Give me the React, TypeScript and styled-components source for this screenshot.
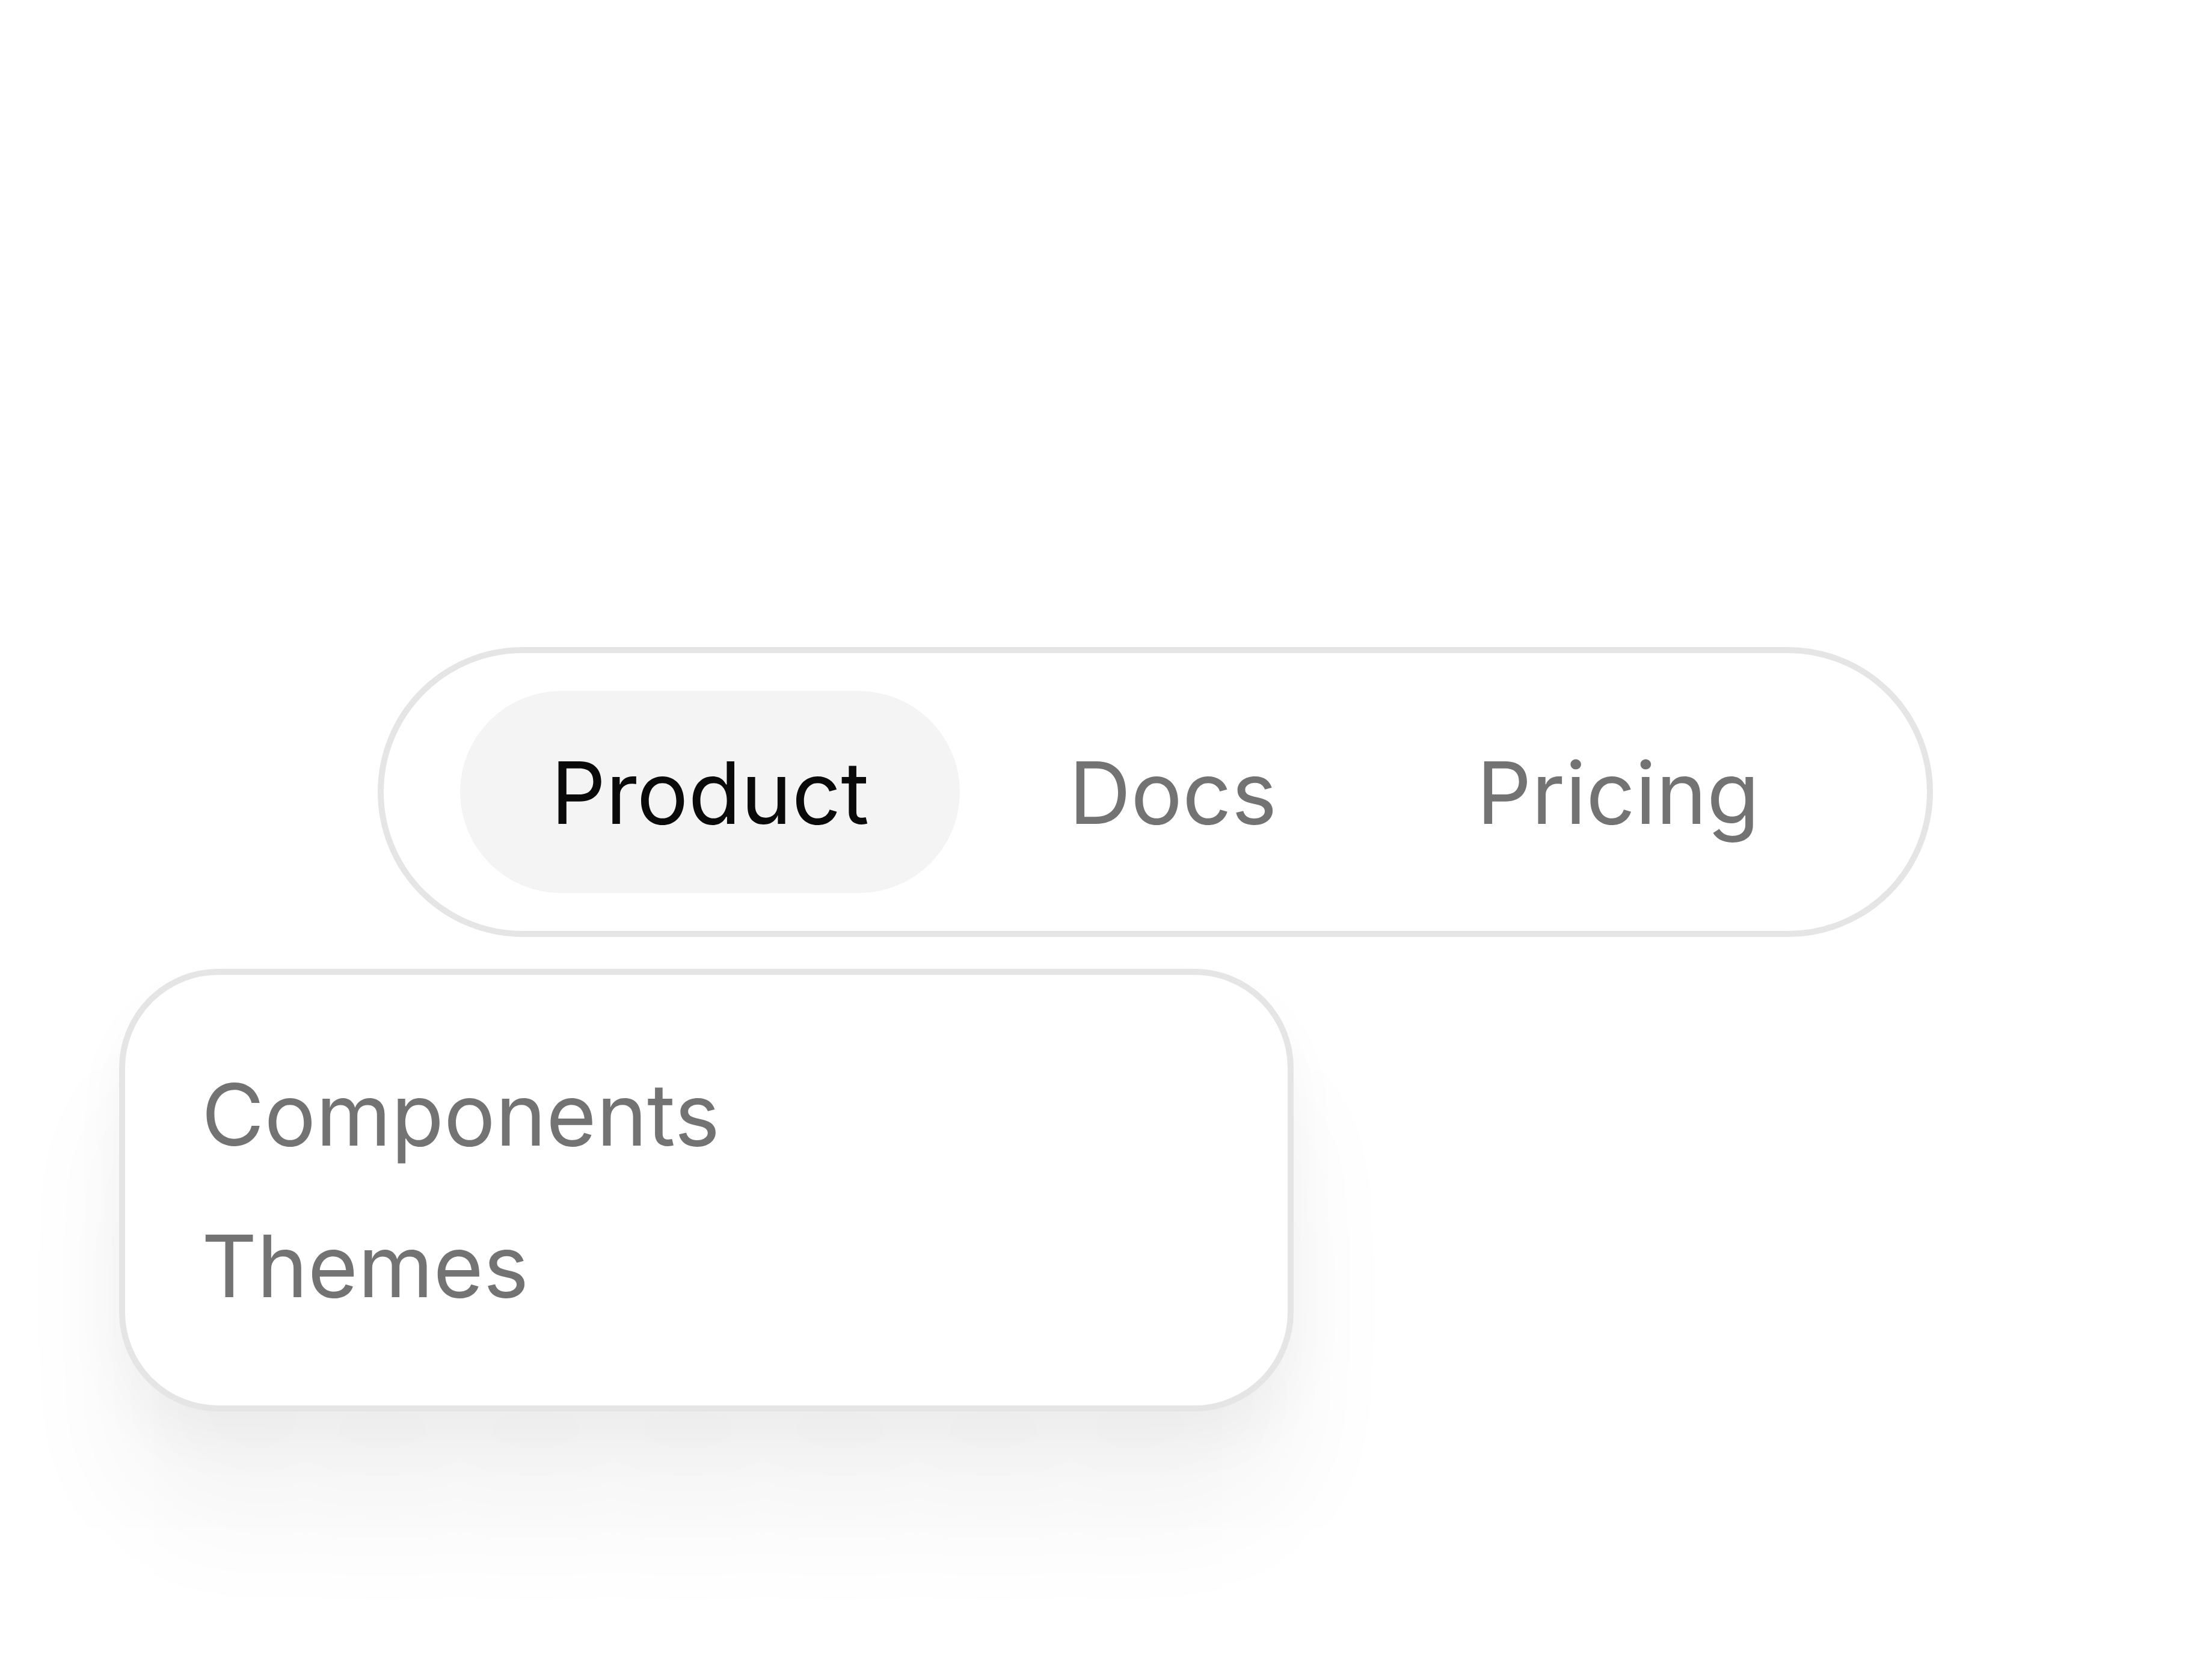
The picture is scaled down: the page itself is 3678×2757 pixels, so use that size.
import styled, { createGlobalStyle } from "styled-components";

const GlobalStyle = createGlobalStyle`
  html, body {
    margin: 0;
    padding: 0;
    background: #ffffff;
  }
  body {
    font-family: Inter, "Liberation Sans", sans-serif;
    -webkit-font-smoothing: antialiased;
  }
`;

const Stage = styled.main`
  display: flex;
  flex-direction: column;
  align-items: flex-start;
  box-sizing: border-box;
  min-height: 2757px;
  padding-top: 1076px;
`;

const Nav = styled.nav`
  display: flex;
  align-items: center;
  gap: 30px;
  margin-left: 628px;
  padding: 63px 127px;
  border: 10px solid #e5e5e5;
  border-radius: 9999px;
  background: #ffffff;
`;

const NavItem = styled.a<{ $active?: boolean }>`
  display: flex;
  align-items: center;
  height: 336px;
  padding: 0 151px;
  border-radius: 9999px;
  font-size: 143px;
  line-height: 1;
  white-space: nowrap;
  text-decoration: none;
  color: ${props => (props.$active ? "#0a0a0a" : "#737373")};
  background: ${props => (props.$active ? "#f4f4f4" : "transparent")};
`;

const Menu = styled.div`
  display: flex;
  flex-direction: column;
  box-sizing: border-box;
  width: 1953px;
  margin: 53px 0 0 198px;
  padding: 106px 127px;
  border: 10px solid #e5e5e5;
  border-radius: 165px;
  background: #ffffff;
  box-shadow:
    0 50px 90px 0 rgba(0, 0, 0, 0.04),
    0 180px 190px 10px rgba(0, 0, 0, 0.045);
`;

const MenuItem = styled.a`
  font-size: 143px;
  line-height: 252px;
  color: #737373;
  text-decoration: none;
  white-space: nowrap;
`;

const links = ["Product", "Docs", "Pricing"];

export default function App() {
  return (
    <>
      <GlobalStyle />
      <Stage>
        <Nav>
          {links.map(label => (
            <NavItem key={label} $active={label === "Product"}>
              {label}
            </NavItem>
          ))}
        </Nav>
        <Menu>
          <MenuItem>Components</MenuItem>
          <MenuItem>Themes</MenuItem>
        </Menu>
      </Stage>
    </>
  );
}
